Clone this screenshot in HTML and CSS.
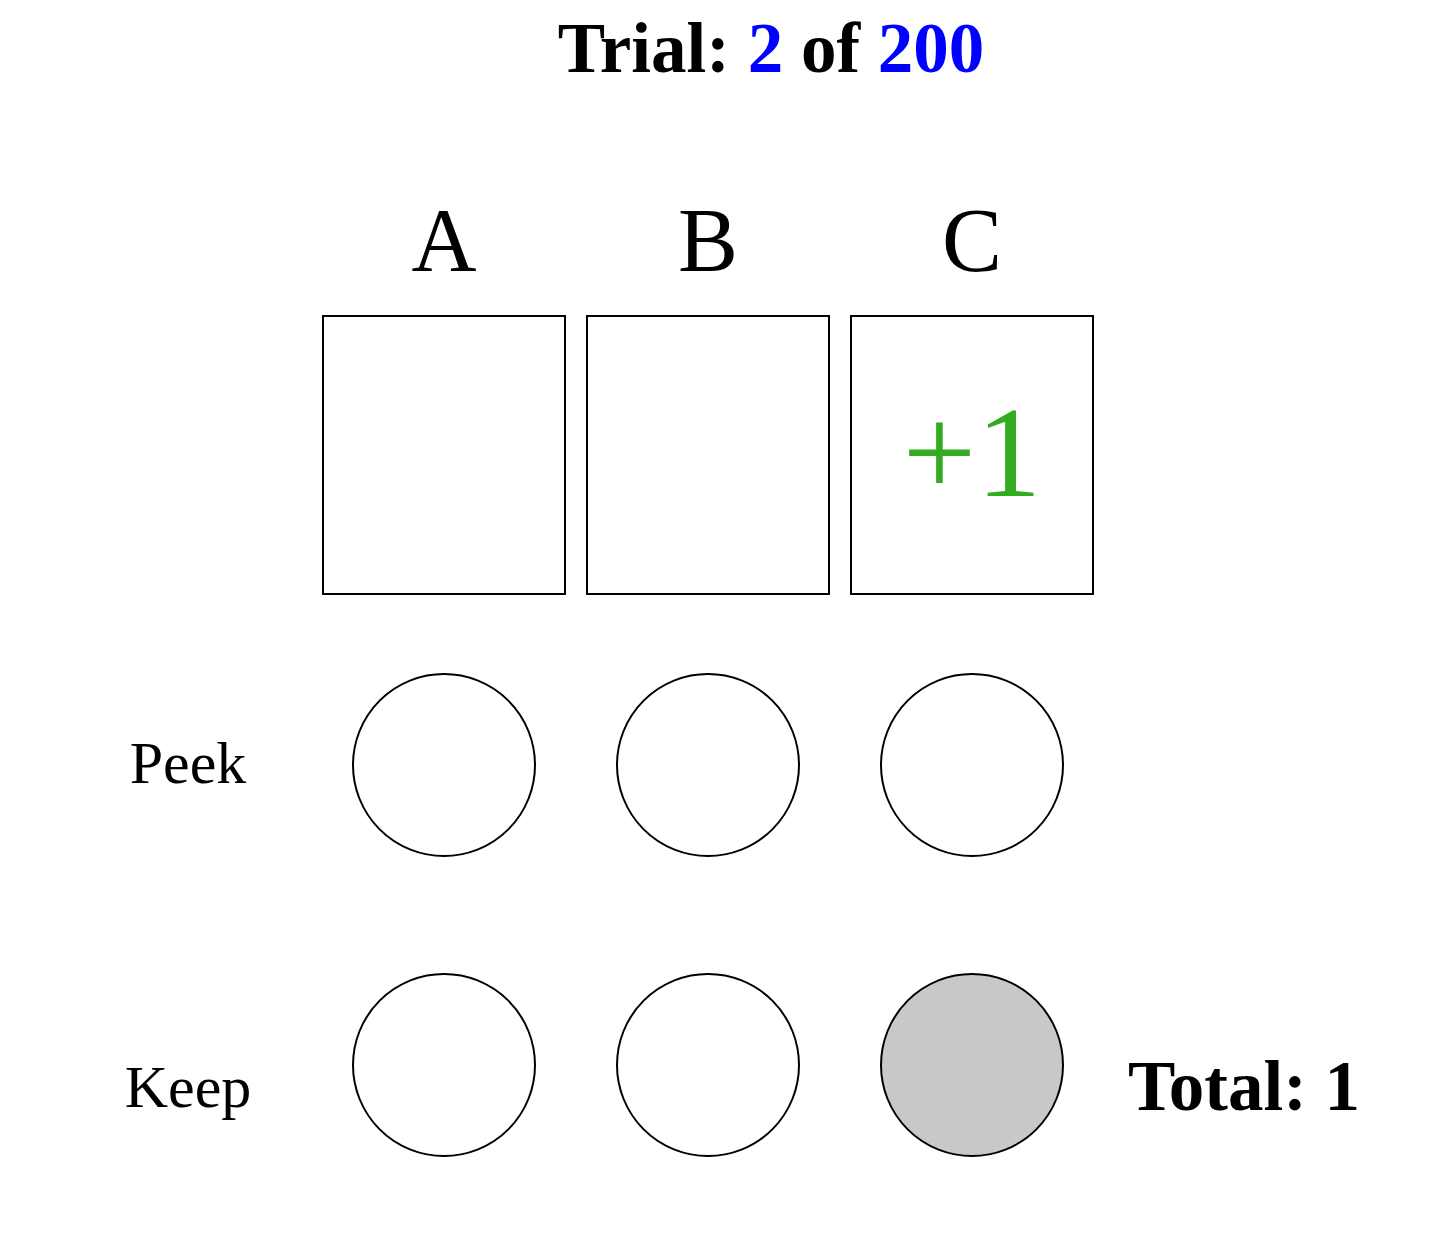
FILE: index.html
```html
<!DOCTYPE html>
<html lang="en">
<head>
<meta charset="utf-8">
<meta name="viewport" content="width=device-width, initial-scale=1">
<title>Trial 2 of 200</title>
<link rel="stylesheet" href="styles.css">
</head>
<body>
<main class="task">
  <h1 class="trial">Trial: <span class="count">2</span> of <span class="count">200</span></h1>
  <div class="board">
    <div class="row names">
      <div class="name" id="deck-a">A</div>
      <div class="name" id="deck-b">B</div>
      <div class="name" id="deck-c">C</div>
    </div>
    <div class="row cards">
      <div class="card"></div>
      <div class="card"></div>
      <div class="card"><span class="gain">+1</span></div>
    </div>
    <div class="row choices">
      <div class="action" id="peek">Peek</div>
      <button class="choice" type="button" aria-labelledby="peek deck-a"></button>
      <button class="choice" type="button" aria-labelledby="peek deck-b"></button>
      <button class="choice" type="button" aria-labelledby="peek deck-c"></button>
    </div>
    <div class="row choices keep">
      <div class="action" id="keep">Keep</div>
      <button class="choice" type="button" aria-labelledby="keep deck-a"></button>
      <button class="choice" type="button" aria-labelledby="keep deck-b"></button>
      <button class="choice selected" type="button" aria-labelledby="keep deck-c" aria-pressed="true"></button>
      <div class="total">Total: 1</div>
    </div>
  </div>
</main>
</body>
</html>
```
FILE: styles.css
```css
body {
  margin: 0;
  background: #fff;
  color: #000;
  font-family: "Liberation Serif", "Times New Roman", serif;
}

.trial {
  margin: 0;
  padding: 8px 0 0 94px;
  font-size: 71px;
  line-height: 80px;
  text-align: center;
}

.count {
  color: #00f;
}

.board {
  padding: 0 74px;
}

.row {
  display: grid;
  grid-template-columns: minmax(130px, 57fr) repeat(3, 244px) minmax(240px, 65fr);
  column-gap: 20px;
  align-items: center;
  justify-items: center;
}

.names {
  margin-top: 101px;
}

.name {
  font-size: 90px;
  line-height: 104px;
}

.name:first-child,
.card:first-child {
  grid-column-start: 2;
}

.cards {
  margin-top: 22px;
}

.card {
  display: flex;
  align-items: center;
  justify-content: center;
  box-sizing: border-box;
  width: 100%;
  height: 280px;
  padding-bottom: 6px;
  border: 2px solid #000;
}

.gain {
  color: #3a2;
  font-size: 130px;
  line-height: 150px;
}

.choices {
  margin-top: 78px;
}

.keep {
  margin-top: 116px;
}

.action {
  padding-bottom: 4px;
  font-size: 60px;
  line-height: 68px;
}

.keep .action {
  padding-top: 48px;
}

.total {
  padding-top: 42px;
  font-size: 71px;
  font-weight: bold;
  line-height: 80px;
  white-space: nowrap;
}

.choice {
  box-sizing: border-box;
  width: 184px;
  height: 184px;
  padding: 0;
  border: 2px solid #000;
  border-radius: 50%;
  background: #fff;
  cursor: pointer;
}

.selected {
  background: #c9c7c8;
}
```
